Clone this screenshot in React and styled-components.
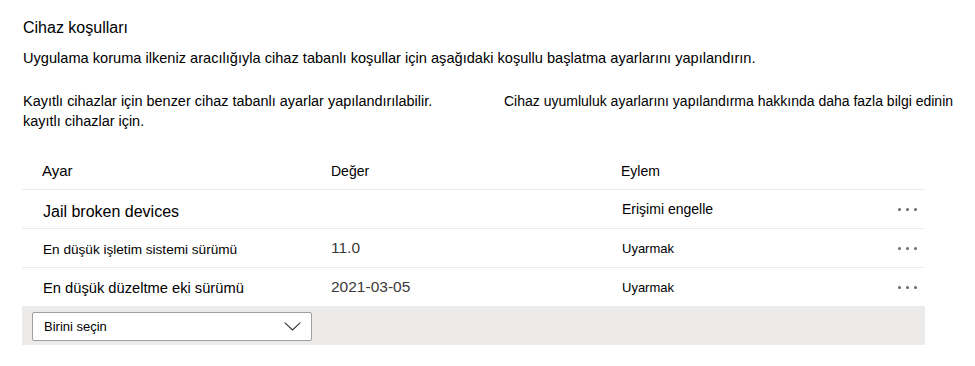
import React from "react";
import styled, { createGlobalStyle } from "styled-components";

const Global = createGlobalStyle`
  html, body { margin: 0; padding: 0; background: #ffffff; }
  body { font-family: "Liberation Sans", Arial, sans-serif; color: #000000; }
`;

const Page = styled.div`
  width: 975px;
  height: 366px;
  box-sizing: border-box;
  padding: 18px 0 0 23px;
`;

const Title = styled.h2`
  margin: 0;
  font-size: 16px;
  font-weight: 400;
  line-height: 20px;
`;

const Description = styled.p`
  margin: 10px 0 0;
  font-size: 14.6px;
  line-height: 20px;
  white-space: nowrap;
`;

const InfoRow = styled.div`
  display: grid;
  grid-template-columns: 481px auto;
  margin-top: 23px;
  line-height: 20px;
`;

const InfoText = styled.div`
  white-space: nowrap;
  font-size: ${(p) => p.$size || 14}px;
`;

const Table = styled.div`
  width: 903px;
  margin: 20px 0 0 -1px;
`;

const Row = styled.div`
  display: grid;
  grid-template-columns: 289px 290px 1fr 40px;
  align-items: center;
  height: 38px;
  padding: 0 8px 0 20px;
  border-bottom: 1px solid #edebe9;
  font-size: 14px;
`;

const HeaderCell = styled.div`
  font-size: ${(p) => p.$size || 14}px;
  color: #000000;
  padding-top: 1px;
`;

const SettingCell = styled.div`
  font-size: ${(p) => p.$size || 14}px;
  color: #000000;
  padding-top: ${(p) => (p.$large ? 5 : 2)}px;
  padding-left: 1px;
  white-space: nowrap;
`;

const ValueCell = styled.div`
  font-size: 15.5px;
  color: #3b3a39;
`;

const ActionCell = styled.div`
  font-size: ${(p) => p.$size || 13}px;
  color: #000000;
  padding-left: 1px;
`;

const MoreButton = styled.div`
  display: flex;
  justify-content: flex-end;
  align-items: center;
  gap: 5px;
`;

const Dot = styled.span`
  width: 3px;
  height: 3px;
  border-radius: 50%;
  background: #6b6a69;
`;

const AddRow = styled.div`
  display: flex;
  align-items: center;
  height: 38px;
  background: #edebe9;
  padding-left: 10px;
`;

const Dropdown = styled.div`
  box-sizing: border-box;
  width: 280px;
  height: 29px;
  background: #ffffff;
  border: 1px solid #a19f9d;
  border-radius: 2px;
  display: flex;
  align-items: center;
  justify-content: space-between;
  padding: 1px 10px 0 11px;
  font-size: 13px;
  color: #000000;
`;

const Chevron = () => (
  <svg width="17" height="9" viewBox="0 0 17 9" fill="none">
    <path d="M0.7 0.7 L8.5 8 L16.3 0.7" stroke="#323130" strokeWidth="1.1" />
  </svg>
);

const More = () => (
  <MoreButton>
    <Dot />
    <Dot />
    <Dot />
  </MoreButton>
);

const rows = [
  { setting: "Jail broken devices", size: 16, large: true, value: "", action: "Erişimi engelle", asize: 14 },
  { setting: "En düşük işletim sistemi sürümü", size: 13.6, value: "11.0", action: "Uyarmak", asize: 13 },
  { setting: "En düşük düzeltme eki sürümü", size: 14.7, value: "2021-03-05", action: "Uyarmak", asize: 13 },
];

export default function App() {
  return (
    <>
      <Global />
      <Page>
        <Title>Cihaz koşulları</Title>
        <Description>
          Uygulama koruma ilkeniz aracılığıyla cihaz tabanlı koşullar için aşağıdaki koşullu başlatma ayarlarını yapılandırın.
        </Description>
        <InfoRow>
          <InfoText $size={14.45}>
            Kayıtlı cihazlar için benzer cihaz tabanlı ayarlar yapılandırılabilir.
            <br />
            kayıtlı cihazlar için.
          </InfoText>
          <InfoText>Cihaz uyumluluk ayarlarını yapılandırma hakkında daha fazla bilgi edinin</InfoText>
        </InfoRow>
        <Table>
          <Row>
            <HeaderCell $size={15}>Ayar</HeaderCell>
            <HeaderCell>Değer</HeaderCell>
            <HeaderCell>Eylem</HeaderCell>
            <div />
          </Row>
          {rows.map((r) => (
            <Row key={r.setting}>
              <SettingCell $size={r.size} $large={r.large}>{r.setting}</SettingCell>
              <ValueCell>{r.value}</ValueCell>
              <ActionCell $size={r.asize}>{r.action}</ActionCell>
              <More />
            </Row>
          ))}
          <AddRow>
            <Dropdown>
              <span>Birini seçin</span>
              <Chevron />
            </Dropdown>
          </AddRow>
        </Table>
      </Page>
    </>
  );
}
